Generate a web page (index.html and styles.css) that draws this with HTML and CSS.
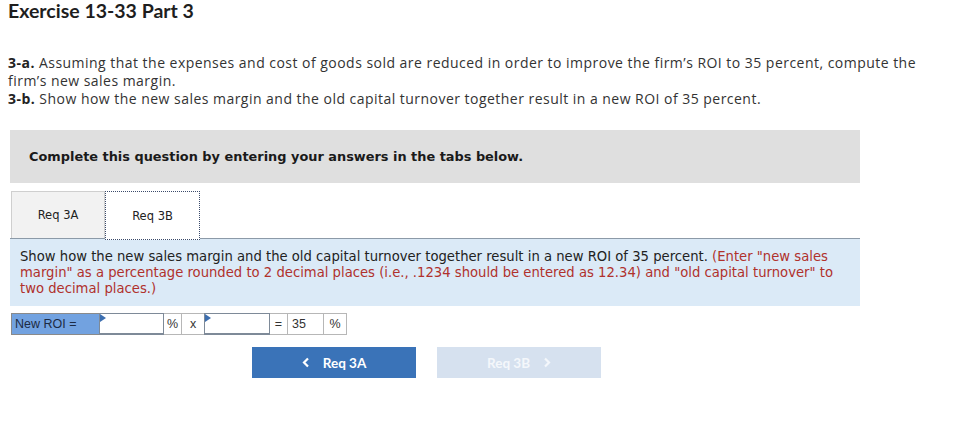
FILE: index.html
```html
<!DOCTYPE html>
<html lang="en">
<head>
<meta charset="utf-8">
<title>Exercise 13-33 Part 3</title>
<link rel="stylesheet" href="styles.css">
</head>
<body>
<h1 class="title">Exercise 13-33 Part 3</h1>
<div class="prompt">
  <p><b>3-a.</b> Assuming that the expenses and cost of goods sold are reduced in order to improve the firm’s ROI to 35 percent, compute the firm’s new sales margin.</p>
  <p><b>3-b.</b> Show how the new sales margin and the old capital turnover together result in a new ROI of 35 percent.</p>
</div>
<div class="exercise">
  <div class="instructions">Complete this question by entering your answers in the tabs below.</div>
  <div class="tabs">
    <div class="tab">Req 3A</div>
    <div class="tab tab-active">Req 3B</div>
  </div>
  <div class="panel">Show how the new sales margin and the old capital turnover together result in a new ROI of 35 percent. <span class="hint">(Enter "new sales margin" as a percentage rounded to 2 decimal places (i.e., .1234 should be entered as 12.34) and "old capital turnover" to two decimal places.)</span></div>
  <div class="answer-row">
    <div class="cell cell-label">New ROI =</div>
    <div class="cell cell-input"></div>
    <div class="cell cell-sym">%</div>
    <div class="cell cell-x">x</div>
    <div class="cell cell-input cell-input2"></div>
    <div class="cell cell-sym">=</div>
    <div class="cell cell-val">35</div>
    <div class="cell cell-sym cell-pct">%</div>
  </div>
  <div class="nav">
    <div class="btn btn-prev"><svg class="chev" width="8" height="11" viewBox="0 0 8 11"><path d="M6 1.5 L2 5.5 L6 9.5" fill="none" stroke="#fff" stroke-width="2.2"/></svg><span>Req 3A</span></div>
    <div class="btn btn-next"><span>Req 3B</span><svg class="chev" width="8" height="11" viewBox="0 0 8 11"><path d="M2 1.5 L6 5.5 L2 9.5" fill="none" stroke="#fff" stroke-width="2.2"/></svg></div>
  </div>
</div>
</body>
</html>
```
FILE: styles.css
```css
html, body {
  margin: 0;
  padding: 0;
  background: #fff;
}
body {
  padding: 0 8px;
  color: #222;
}
.title {
  font-family: "Lato", sans-serif;
  font-weight: 700;
  font-size: 19.5px;
  line-height: 24px;
  margin: -1px 0 0 0;
  color: #1e1e1e;
}
.prompt {
  margin-top: 31px;
  font-family: "Open Sans", sans-serif;
  font-size: 14px;
  letter-spacing: 0.47px;
  line-height: 18px;
  color: #333;
}
.prompt p {
  margin: 0;
}
.prompt b {
  font-weight: 700;
  color: #222;
}
.exercise {
  width: 850px;
  margin: 22px 0 0 2px;
  font-family: "DejaVu Sans", Verdana, sans-serif;
}
.instructions {
  background: #dfdfdf;
  height: 53px;
  box-sizing: border-box;
  padding: 0 0 0 19px;
  display: flex;
  align-items: center;
  font-weight: 700;
  font-size: 12.9px;
  color: #1a1a1a;
}
.tabs {
  display: flex;
  margin-top: 8px;
  padding-left: 1px;
}
.tab {
  width: 94px;
  height: 47px;
  box-sizing: border-box;
  display: flex;
  align-items: center;
  justify-content: center;
  font-size: 11.5px;
  color: #222;
  background: #f2f2f2;
  border: 1px solid #cfcfcf;
  border-bottom: none;
}
.tab-active {
  width: 95px;
  height: 49px;
  margin-bottom: -2px;
  background: #fff;
  border: 1px dotted #3a4a6a;
  position: relative;
  z-index: 1;
}
.panel {
  background: #dbeaf7;
  border-top: 1px solid #8c9aa8;
  padding: 10px 10px 9px 10px;
  font-size: 13.2px;
  line-height: 16px;
  color: #222;
}
.hint {
  color: #b0312c;
}
.answer-row {
  display: flex;
  margin-top: 7px;
  padding-left: 1px;
  height: 22px;
  font-family: "Liberation Sans", Arial, sans-serif;
  font-size: 12.5px;
  color: #333;
}
.cell {
  box-sizing: border-box;
  height: 22px;
  border: 1px solid #b7b7b7;
  margin-left: -1px;
  display: flex;
  align-items: center;
  padding: 0 3px;
  background: #fff;
}
.cell:first-child {
  margin-left: 0;
}
.cell-label {
  width: 89px;
  background: #72a2e0;
  border-color: #8a8a8a;
  color: #1d2b44;
  padding-left: 3px;
}
.cell-input {
  width: 65px;
  border: 1px solid #7e8a98;
  border-bottom-width: 2px;
  position: relative;
}
.cell-input::before {
  content: "";
  position: absolute;
  left: 0;
  top: 0;
  border-style: solid;
  border-width: 4px 0 4px 6px;
  border-color: transparent transparent transparent #3d6fb0;
}
.cell-input2 {
  width: 66px;
}
.cell-sym {
  width: 19px;
  justify-content: center;
  padding: 0;
}
.cell-x {
  width: 24px;
  justify-content: center;
  padding: 0;
}
.cell-val {
  width: 37px;
  padding-left: 4px;
}
.cell-pct {
  width: 24px;
}
.nav {
  display: flex;
  gap: 21px;
  margin-top: 12px;
  padding-left: 242px;
}
.btn {
  width: 164px;
  height: 31px;
  display: flex;
  align-items: center;
  justify-content: center;
  gap: 13px;
  font-family: "Lato", sans-serif;
  font-weight: 700;
  font-size: 13.5px;
  color: #fff;
}
.btn-prev {
  background: #3a73b8;
}
.btn-next {
  background: #d6e1ef;
  color: #f4f7fb;
}
.btn-next .chev path {
  stroke: #f4f7fb;
}
```
